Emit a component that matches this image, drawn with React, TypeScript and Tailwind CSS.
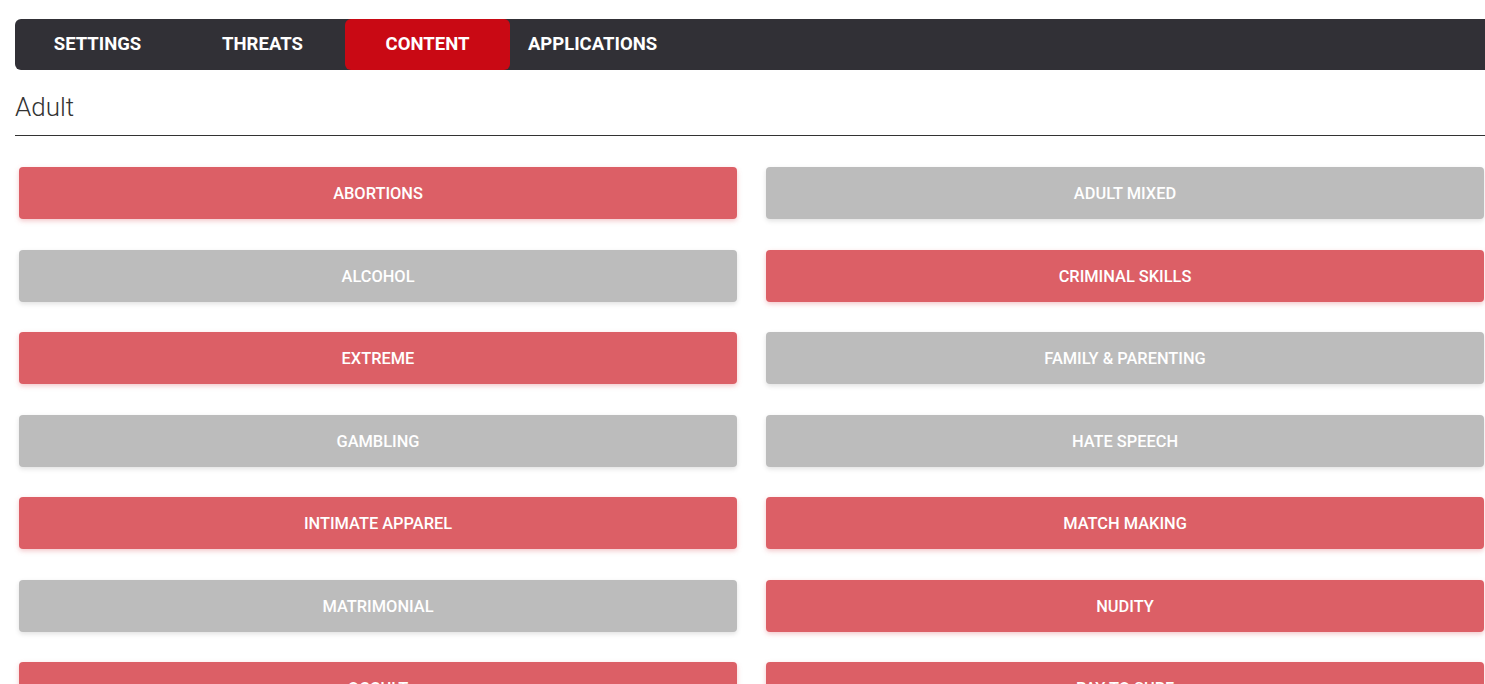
import React from "react";

// Content filter categories — red = blocked, gray = allowed.
const categories: { name: string; blocked: boolean }[] = [
  { name: "ABORTIONS", blocked: true },
  { name: "ADULT MIXED", blocked: false },
  { name: "ALCOHOL", blocked: false },
  { name: "CRIMINAL SKILLS", blocked: true },
  { name: "EXTREME", blocked: true },
  { name: "FAMILY & PARENTING", blocked: false },
  { name: "GAMBLING", blocked: false },
  { name: "HATE SPEECH", blocked: false },
  { name: "INTIMATE APPAREL", blocked: true },
  { name: "MATCH MAKING", blocked: true },
  { name: "MATRIMONIAL", blocked: false },
  { name: "NUDITY", blocked: true },
  { name: "OCCULT", blocked: true },
  { name: "PAY TO SURF", blocked: true },
  { name: "PORNOGRAPHY", blocked: true },
  { name: "SEX EDUCATION", blocked: false },
];

const tabs = ["SETTINGS", "THREATS", "CONTENT", "APPLICATIONS"];

export default function App() {
  return (
    <div
      className="h-screen overflow-hidden bg-white pl-[15px] pt-[19px]"
      style={{ fontFamily: "Roboto, 'Liberation Sans', sans-serif" }}
    >
      <nav className="flex h-[51px] items-stretch rounded-l-[6px] bg-[#313036]">
        {tabs.map((t) => (
          <button
            key={t}
            type="button"
            className={`flex w-[165px] items-center justify-center rounded-[6px] pt-px text-[18.5px] font-bold text-white ${
              t === "CONTENT" ? "bg-[#c90914]" : ""
            }`}
          >
            {t}
          </button>
        ))}
      </nav>

      <section className="mt-[19px] rounded-tl-[6px] bg-white">
        <h2 className="h-[46px] text-[26px] font-light leading-[36px] text-[#333]">
          Adult
        </h2>
        <div className="h-px bg-[#333]" />

        <div className="grid grid-cols-2 gap-x-[29px] gap-y-[30.5px] pl-[4px] pr-[1px] pt-[31px]">
          {categories.map((c) => (
            <button
              key={c.name}
              type="button"
              className={`flex h-[52px] items-center justify-center rounded-[4px] pt-[3px] text-[16.4px] font-medium text-white ${
                c.blocked
                  ? "bg-[#dc5f66] shadow-[0_2px_5px_rgba(220,95,102,0.35)]"
                  : "bg-[#bcbcbc] shadow-[0_2px_5px_rgba(0,0,0,0.12)]"
              }`}
            >
              {c.name}
            </button>
          ))}
        </div>
      </section>
    </div>
  );
}
